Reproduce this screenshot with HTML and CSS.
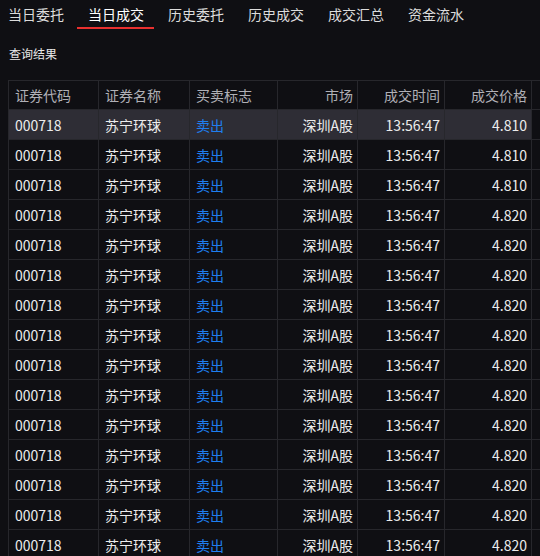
FILE: index.html
```html
<!DOCTYPE html>
<html lang="zh-CN">
<head>
<meta charset="utf-8">
<link rel="stylesheet" href="styles.css">
</head>
<body>
<div class="tabs">
  <div class="tab">当日委托</div>
  <div class="tab active">当日成交</div>
  <div class="tab">历史委托</div>
  <div class="tab">历史成交</div>
  <div class="tab">成交汇总</div>
  <div class="tab">资金流水</div>
</div>
<div class="caption">查询结果</div>
<table class="grid">
  <colgroup>
    <col class="c1"><col class="c2"><col class="c3"><col class="c4"><col class="c5"><col class="c6"><col class="c7">
  </colgroup>
  <thead>
    <tr><th>证券代码</th><th>证券名称</th><th>买卖标志</th><th class="r">市场</th><th class="r">成交时间</th><th class="r">成交价格</th><th class="x"></th></tr>
  </thead>
  <tbody>
    <tr class="sel"><td>000718</td><td>苏宁环球</td><td class="sell">卖出</td><td class="r">深圳A股</td><td class="r">13:56:47</td><td class="r">4.810</td><td class="x"></td></tr>
    <tr><td>000718</td><td>苏宁环球</td><td class="sell">卖出</td><td class="r">深圳A股</td><td class="r">13:56:47</td><td class="r">4.810</td><td class="x"></td></tr>
    <tr><td>000718</td><td>苏宁环球</td><td class="sell">卖出</td><td class="r">深圳A股</td><td class="r">13:56:47</td><td class="r">4.810</td><td class="x"></td></tr>
    <tr><td>000718</td><td>苏宁环球</td><td class="sell">卖出</td><td class="r">深圳A股</td><td class="r">13:56:47</td><td class="r">4.820</td><td class="x"></td></tr>
    <tr><td>000718</td><td>苏宁环球</td><td class="sell">卖出</td><td class="r">深圳A股</td><td class="r">13:56:47</td><td class="r">4.820</td><td class="x"></td></tr>
    <tr><td>000718</td><td>苏宁环球</td><td class="sell">卖出</td><td class="r">深圳A股</td><td class="r">13:56:47</td><td class="r">4.820</td><td class="x"></td></tr>
    <tr><td>000718</td><td>苏宁环球</td><td class="sell">卖出</td><td class="r">深圳A股</td><td class="r">13:56:47</td><td class="r">4.820</td><td class="x"></td></tr>
    <tr><td>000718</td><td>苏宁环球</td><td class="sell">卖出</td><td class="r">深圳A股</td><td class="r">13:56:47</td><td class="r">4.820</td><td class="x"></td></tr>
    <tr><td>000718</td><td>苏宁环球</td><td class="sell">卖出</td><td class="r">深圳A股</td><td class="r">13:56:47</td><td class="r">4.820</td><td class="x"></td></tr>
    <tr><td>000718</td><td>苏宁环球</td><td class="sell">卖出</td><td class="r">深圳A股</td><td class="r">13:56:47</td><td class="r">4.820</td><td class="x"></td></tr>
    <tr><td>000718</td><td>苏宁环球</td><td class="sell">卖出</td><td class="r">深圳A股</td><td class="r">13:56:47</td><td class="r">4.820</td><td class="x"></td></tr>
    <tr><td>000718</td><td>苏宁环球</td><td class="sell">卖出</td><td class="r">深圳A股</td><td class="r">13:56:47</td><td class="r">4.820</td><td class="x"></td></tr>
    <tr><td>000718</td><td>苏宁环球</td><td class="sell">卖出</td><td class="r">深圳A股</td><td class="r">13:56:47</td><td class="r">4.820</td><td class="x"></td></tr>
    <tr><td>000718</td><td>苏宁环球</td><td class="sell">卖出</td><td class="r">深圳A股</td><td class="r">13:56:47</td><td class="r">4.820</td><td class="x"></td></tr>
    <tr><td>000718</td><td>苏宁环球</td><td class="sell">卖出</td><td class="r">深圳A股</td><td class="r">13:56:47</td><td class="r">4.820</td><td class="x"></td></tr>
  </tbody>
</table>
</body>
</html>
```

FILE: styles.css
```css
html, body {
  margin: 0;
  padding: 0;
  background: #0f0f13;
  overflow: hidden;
}
body {
  width: 540px;
  height: 556px;
  font-family: "Noto Sans CJK SC", "Noto Sans", sans-serif;
  color: #e6e6e6;
}
.tabs {
  display: flex;
  margin-left: -4px;
  height: 30px;
}
.tab {
  position: relative;
  padding: 4px 12px 0;
  font-size: 14px;
  line-height: 20px;
  color: #dcdcdc;
  white-space: nowrap;
}
.tab.active {
  color: #ffffff;
}
.tab.active::after {
  content: "";
  position: absolute;
  left: 1px;
  right: 2px;
  top: 27px;
  height: 2px;
  background: #e8302f;
}
.caption {
  margin: 15px 0 0 9px;
  font-size: 12px;
  line-height: 17px;
  height: 17px;
  color: #e8e8e8;
}
.grid {
  margin: 18px 0 0 8px;
  border-collapse: collapse;
  table-layout: fixed;
  width: 610px;
  font-size: 14px;
}
.c1 { width: 90px; }
.c2 { width: 91px; }
.c3 { width: 88px; }
.c4 { width: 80px; }
.c5 { width: 87px; }
.c6 { width: 87px; }
.c7 { width: 87px; }
.grid th, .grid td {
  border: 1px solid #27272c;
  padding: 0 4px 0 6px;
  text-align: left;
  white-space: nowrap;
  overflow: hidden;
}
.grid th {
  height: 28px;
  font-weight: normal;
  color: #b0b0b6;
}
.grid td {
  height: 29px;
  color: #ececec;
}
.grid .r {
  text-align: right;
}
.grid td.sell {
  color: #1f7fef;
}
.grid tr.sel td {
  background: #2e2d35;
}
.grid tr.sel td.x {
  background: transparent;
}
```
